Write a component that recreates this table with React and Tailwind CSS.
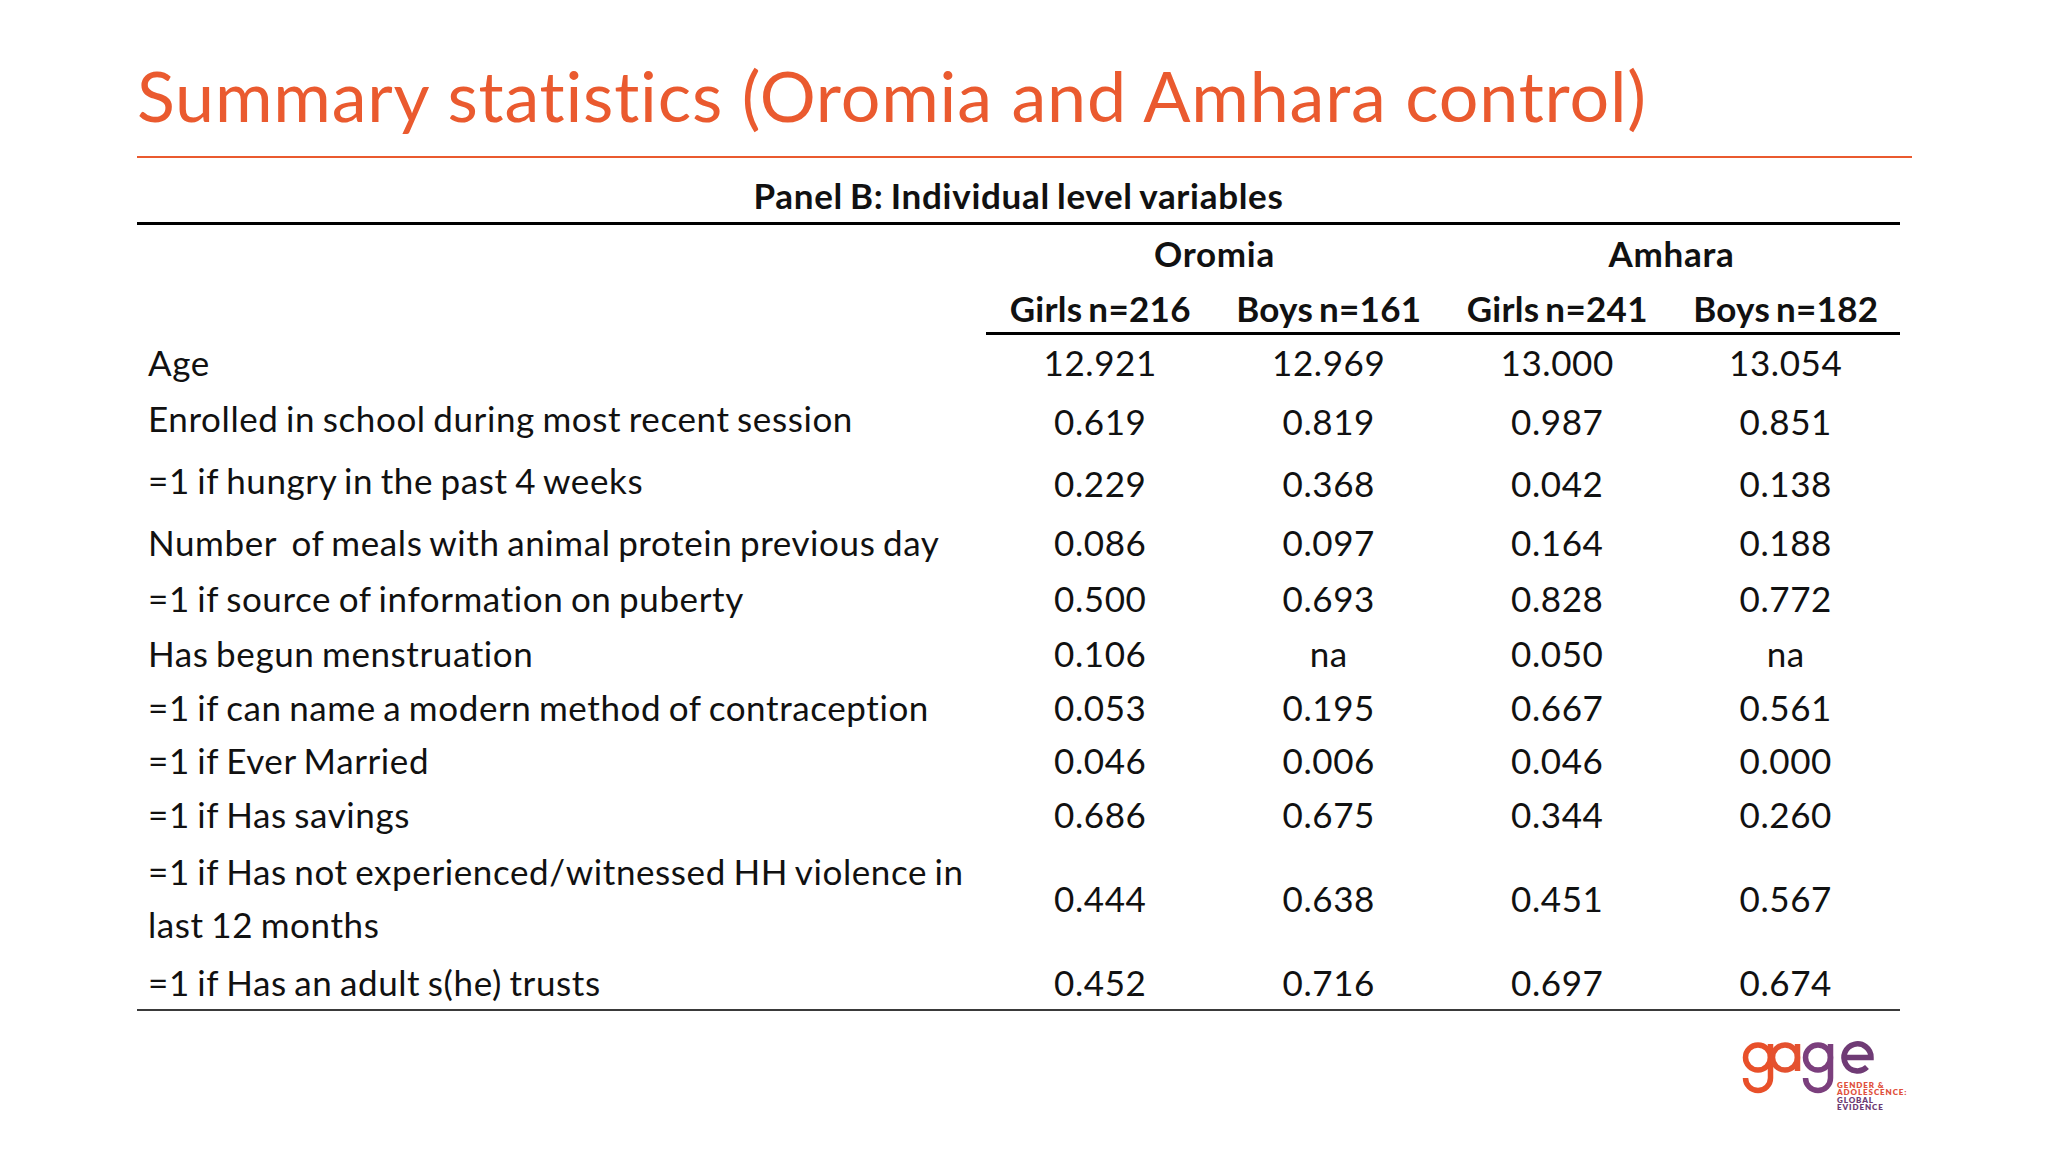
// Summary statistics slide — Panel B individual level variables table.

const rows = [
  { label: 'Age', values: ['12.921', '12.969', '13.000', '13.054'], h: 'h-[55px]' },
  { label: 'Enrolled in school during most recent session', values: ['0.619', '0.819', '0.987', '0.851'], h: 'h-[62px]', lift: true },
  { label: '=1 if hungry in the past 4 weeks', values: ['0.229', '0.368', '0.042', '0.138'], h: 'h-[62px]', lift: true },
  { label: 'Number  of meals with animal protein previous day', values: ['0.086', '0.097', '0.164', '0.188'], h: 'h-[56px]' },
  { label: '=1 if source of information on puberty', values: ['0.500', '0.693', '0.828', '0.772'], h: 'h-[56px]' },
  { label: 'Has begun menstruation', values: ['0.106', 'na', '0.050', 'na'], h: 'h-[55px]' },
  { label: '=1 if can name a modern method of contraception', values: ['0.053', '0.195', '0.667', '0.561'], h: 'h-[53px]' },
  { label: '=1 if Ever Married', values: ['0.046', '0.006', '0.046', '0.000'], h: 'h-[53px]' },
  { label: '=1 if Has savings', values: ['0.686', '0.675', '0.344', '0.260'], h: 'h-[54px]' },
  {
    label: '=1 if Has not experienced/witnessed HH violence in\nlast 12 months',
    values: ['0.444', '0.638', '0.451', '0.567'],
    h: 'h-[114px]',
  },
  { label: '=1 if Has an adult s(he) trusts', values: ['0.452', '0.716', '0.697', '0.674'], h: 'h-[54px]' },
];

const subHeads = ['Girls n=216', 'Boys n=161', 'Girls n=241', 'Boys n=182'];

function GageLogo() {
  return (
    <svg width="176" height="80" viewBox="0 0 176 80" fill="none">
      {/* g */}
      <circle cx="18" cy="21.5" r="12.5" stroke="#e8502a" strokeWidth="5.5" />
      <path d="M30.5 8 V42 A12.5 12.5 0 0 1 5.5 42" stroke="#e8502a" strokeWidth="5.5" />
      {/* a */}
      <circle cx="45" cy="21.5" r="12.5" stroke="#e4512f" strokeWidth="5.5" />
      <path d="M57.5 8 V35" stroke="#e4512f" strokeWidth="5.5" />
      {/* g */}
      <circle cx="78" cy="21.5" r="12.5" stroke="#7b3f7d" strokeWidth="5.5" />
      <path d="M90.5 8 V42 A12.5 12.5 0 0 1 65.5 42" stroke="#7b3f7d" strokeWidth="5.5" />
      {/* e */}
      <path d="M104 21.5 H131 A13.5 13.5 0 1 0 127 31" stroke="#6f3b75" strokeWidth="5.5" />
      <g fontFamily="Lato, 'Liberation Sans', sans-serif" fontSize="8" fontWeight="800" letterSpacing="0.9">
        <text x="97" y="51.5" fill="#e0503c">GENDER &amp;</text>
        <text x="97" y="59" fill="#e0503c">ADOLESCENCE:</text>
        <text x="97" y="66.5" fill="#6d3a74">GLOBAL</text>
        <text x="97" y="74" fill="#6d3a74">EVIDENCE</text>
      </g>
    </svg>
  );
}

export default function App() {
  return (
    <div className="w-[2048px] h-[1152px] bg-white text-[#111] font-['Lato','Liberation_Sans',sans-serif] [font-variant-ligatures:none] overflow-hidden">
      <div className="pl-[137px] pt-[60px]">
        <h1 className="text-[70px] leading-[70px] tracking-[0.8px] text-[#ea5a2f] font-normal whitespace-nowrap">
          Summary statistics (Oromia and Amhara control)
        </h1>
        <div className="mt-[26px] w-[1775px] h-[2px] bg-[#ea5a2f]" />

        <div className="w-[1763px]">
          <div className="h-[64px] flex items-end justify-center pb-[9px] text-[35px] leading-[35px] font-bold tracking-[0.7px] [word-spacing:-2px]">
            Panel B: Individual level variables
          </div>

          <div className="border-t-[3px] border-black border-b-2 border-b-[#3a3a3a] grid grid-cols-[849px_repeat(4,minmax(0,1fr))]">
            {/* region header */}
            <div className="h-[56px]" />
            <div className="col-span-2 h-[56px] flex items-center justify-center text-[35px] font-bold tracking-[0.7px]">Oromia</div>
            <div className="col-span-2 h-[56px] flex items-center justify-center text-[35px] font-bold tracking-[0.7px]">Amhara</div>

            {/* sub header */}
            <div className="h-[54px]" />
            {subHeads.map((s) => (
              <div
                key={s}
                className="h-[54px] pt-[4px] border-b-[3px] border-black flex items-center justify-center text-[35px] font-bold whitespace-nowrap tracking-[0.3px] [word-spacing:-3px]"
              >
                {s}
              </div>
            ))}

            {rows.map((r) => (
              <div key={r.label} className="contents">
                <div
                  className={`${r.h} ${r.lift ? 'pb-[6px]' : ''} pl-[11px] flex items-center text-[35px] leading-[53px] tracking-[0.6px] [word-spacing:-2px] whitespace-pre`}
                >
                  {r.label}
                </div>
                {r.values.map((v, i) => (
                  <div key={i} className={`${r.h} flex items-center justify-center text-[35px] tracking-[0.6px]`}>
                    {v}
                  </div>
                ))}
              </div>
            ))}
          </div>
        </div>
      </div>

      <div className="flex justify-end pr-[132px] mt-[25px]">
        <GageLogo />
      </div>
    </div>
  );
}
